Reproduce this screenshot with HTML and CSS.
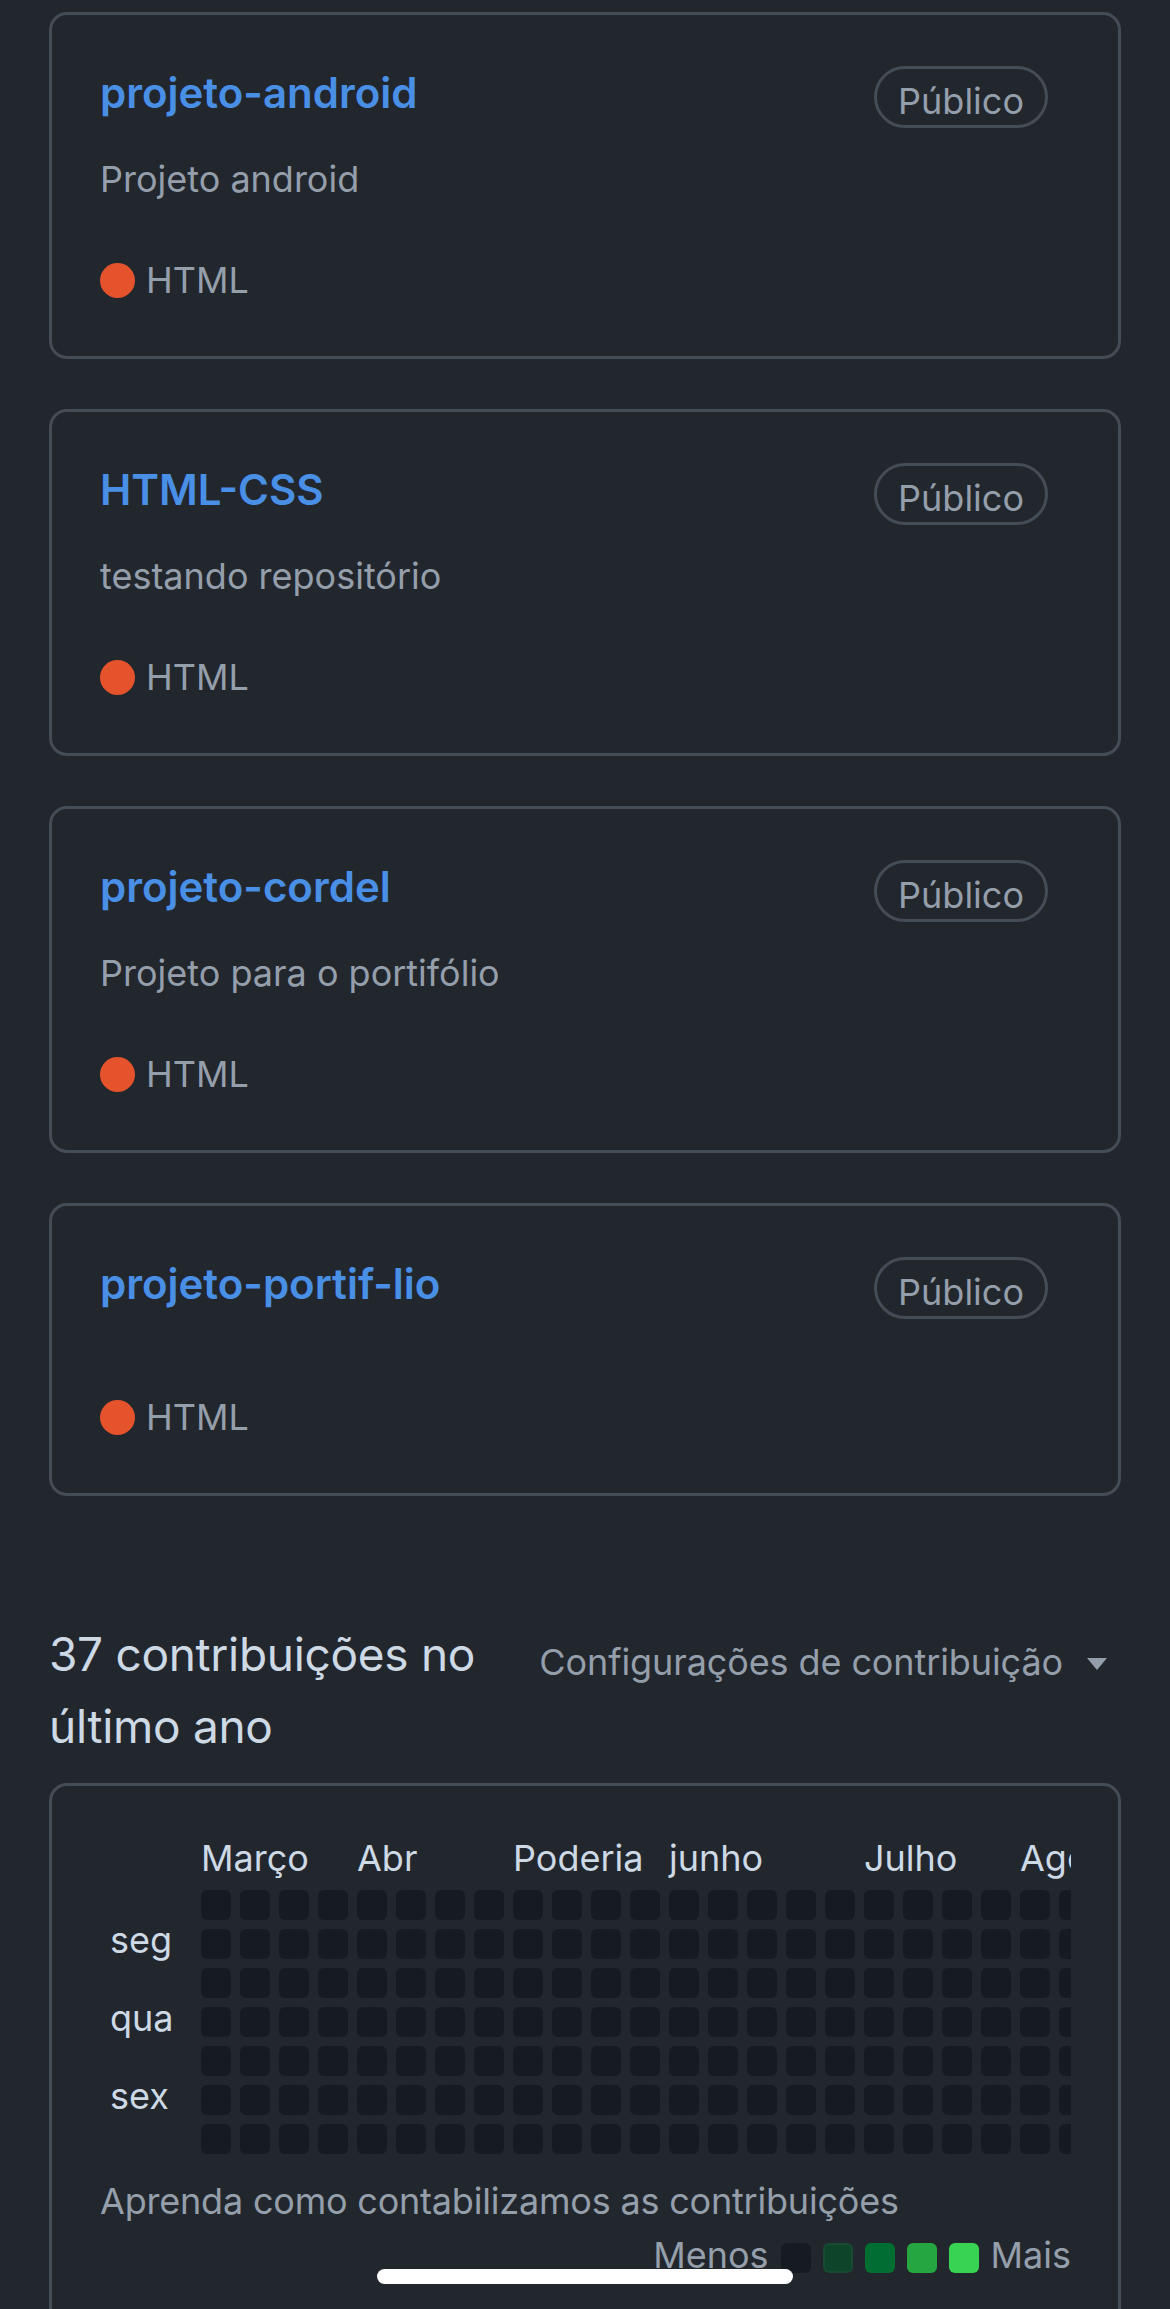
FILE: index.html
```html
<!DOCTYPE html>
<html lang="pt-BR">
<head>
<meta charset="utf-8">
<title>Repositórios</title>
<link rel="stylesheet" href="styles.css">
</head>
<body>
<main class="page">
  <section class="repos">
    <article class="card">
      <div class="card-head">
        <a class="repo-name" href="#">projeto-android</a>
        <span class="pill">Público</span>
      </div>
      <p class="desc">Projeto android</p>
      <div class="lang"><span class="dot"></span><span>HTML</span></div>
    </article>
    <article class="card">
      <div class="card-head">
        <a class="repo-name" href="#">HTML-CSS</a>
        <span class="pill">Público</span>
      </div>
      <p class="desc">testando repositório</p>
      <div class="lang"><span class="dot"></span><span>HTML</span></div>
    </article>
    <article class="card">
      <div class="card-head">
        <a class="repo-name" href="#">projeto-cordel</a>
        <span class="pill">Público</span>
      </div>
      <p class="desc">Projeto para o portifólio</p>
      <div class="lang"><span class="dot"></span><span>HTML</span></div>
    </article>
    <article class="card">
      <div class="card-head">
        <a class="repo-name" href="#">projeto-portif-lio</a>
        <span class="pill">Público</span>
      </div>
      <p class="desc empty"></p>
      <div class="lang"><span class="dot"></span><span>HTML</span></div>
    </article>
  </section>

  <section class="contrib">
    <div class="contrib-head">
      <h2 class="contrib-title">37 contribuições no último ano</h2>
      <div class="settings">Configurações de contribuição <span class="caret"></span></div>
    </div>
    <div class="cal-box">
      <div class="cal-clip">
        <div class="cal-grid" id="grid">
          <span class="month" style="grid-column: 2 / span 4">Março</span>
          <span class="month" style="grid-column: 6 / span 4">Abr</span>
          <span class="month" style="grid-column: 10 / span 4">Poderia</span>
          <span class="month" style="grid-column: 14 / span 4">junho</span>
          <span class="month" style="grid-column: 19 / span 4">Julho</span>
          <span class="month" style="grid-column: 23 / span 2">Ago</span>
          <span class="day" style="grid-row: 3">seg</span>
          <span class="day" style="grid-row: 5">qua</span>
          <span class="day" style="grid-row: 7">sex</span>
        </div>
      </div>
      <p class="learn">Aprenda como contabilizamos as contribuições</p>
      <div class="legend">
        <span>Menos</span>
        <span class="lcell l0"></span>
        <span class="lcell l1"></span>
        <span class="lcell l2"></span>
        <span class="lcell l3"></span>
        <span class="lcell l4"></span>
        <span>Mais</span>
      </div>
    </div>
  </section>
</main>
<div class="home-bar"></div>
<script>
  (function () {
    var g = document.getElementById('grid');
    for (var c = 0; c < 23; c++) {
      for (var r = 0; r < 7; r++) {
        var d = document.createElement('span');
        d.className = 'cell';
        d.style.gridColumn = (c + 2);
        d.style.gridRow = (r + 2);
        g.appendChild(d);
      }
    }
  })();
</script>
</body>
</html>
```

FILE: styles.css
```css
* { box-sizing: border-box; }

html, body {
  margin: 0;
  padding: 0;
  background: #22272e;
}

body {
  font-family: Inter, "Noto Sans", "Liberation Sans", sans-serif;
  color: #adbac7;
  height: 2309px;
  overflow: hidden;
}

.page {
  padding: 12px 49px 0 49px;
}

.repos {
  display: flex;
  flex-direction: column;
  gap: 50px;
}

.card {
  display: flex;
  flex-direction: column;
  border: 3px solid #444c56;
  border-radius: 18px;
  padding: 46px 70px 49px 48px;
}

.card-head {
  display: flex;
  justify-content: space-between;
  align-items: flex-start;
  height: 63px;
}

.repo-name {
  font-size: 42px;
  line-height: 63px;
  font-weight: 600;
  color: #4a8fe6;
  text-decoration: none;
}

.pill {
  margin-top: 5px;
  border: 3px solid #444c56;
  border-radius: 40px;
  padding: 8px 21px 0 21px;
  font-size: 36px;
  line-height: 48px;
  height: 62px;
  color: #959fab;
}

.desc {
  margin: 28px 0 0 0;
  font-size: 36px;
  line-height: 54px;
  color: #959fab;
}

.desc.empty {
  height: 0;
}

.lang {
  margin-top: 47px;
  display: flex;
  align-items: center;
  gap: 11px;
  font-size: 36px;
  line-height: 54px;
  color: #959fab;
}

.dot {
  width: 35px;
  height: 35px;
  border-radius: 50%;
  background: #e5532d;
}

.contrib {
  margin-top: 122px;
}

.contrib-head {
  display: flex;
  justify-content: space-between;
  align-items: flex-start;
  gap: 40px;
}

.contrib-title {
  margin: 0;
  flex: 1;
  font-size: 46px;
  letter-spacing: -0.3px;
  line-height: 72px;
  font-weight: 400;
  color: #cdd9e5;
}

.settings {
  margin-top: 17px;
  margin-right: 14px;
  display: flex;
  align-items: center;
  gap: 24px;
  font-size: 36px;
  letter-spacing: -0.1px;
  line-height: 54px;
  color: #959fab;
  white-space: nowrap;
}

.caret {
  width: 0;
  height: 0;
  border-left: 10px solid transparent;
  border-right: 10px solid transparent;
  border-top: 12px solid #959fab;
  margin-top: 4px;
}

.cal-box {
  margin-top: 21px;
  border: 3px solid #444c56;
  border-radius: 18px;
  padding: 50px 47px 80px 48px;
}

.cal-clip {
  overflow: hidden;
}

.cal-grid {
  display: grid;
  grid-template-columns: 92px repeat(23, 30px);
  grid-template-rows: 45px repeat(7, 30px);
  column-gap: 9px;
  row-gap: 9px;
}

.month {
  grid-row: 1;
  font-size: 36px;
  line-height: 45px;
  color: #cdd9e5;
  white-space: nowrap;
}

.day {
  grid-column: 1;
  padding-left: 10px;
  font-size: 36px;
  line-height: 22px;
  color: #cdd9e5;
}

.cell {
  width: 30px;
  height: 30px;
  border-radius: 6px;
  background: #161b22;
}

.learn {
  margin: 20px 0 0 0;
  font-size: 36px;
  letter-spacing: -0.2px;
  line-height: 54px;
  color: #959fab;
}

.legend {
  margin-top: 0;
  display: flex;
  justify-content: flex-end;
  align-items: center;
  gap: 12px;
  font-size: 36px;
  line-height: 54px;
  color: #959fab;
}

.lcell {
  width: 30px;
  height: 30px;
  border-radius: 6px;
  margin-top: 6px;
}

.l0 { background: #161b22; }
.l1 { background: #0e4429; box-shadow: inset 0 0 0 2px rgba(255,255,255,0.04); }
.l2 { background: #006d32; }
.l3 { background: #26a641; }
.l4 { background: #39d353; }

.home-bar {
  position: fixed;
  left: 50%;
  bottom: 25px;
  width: 416px;
  height: 15px;
  margin-left: -208px;
  border-radius: 8px;
  background: #ffffff;
}
```
